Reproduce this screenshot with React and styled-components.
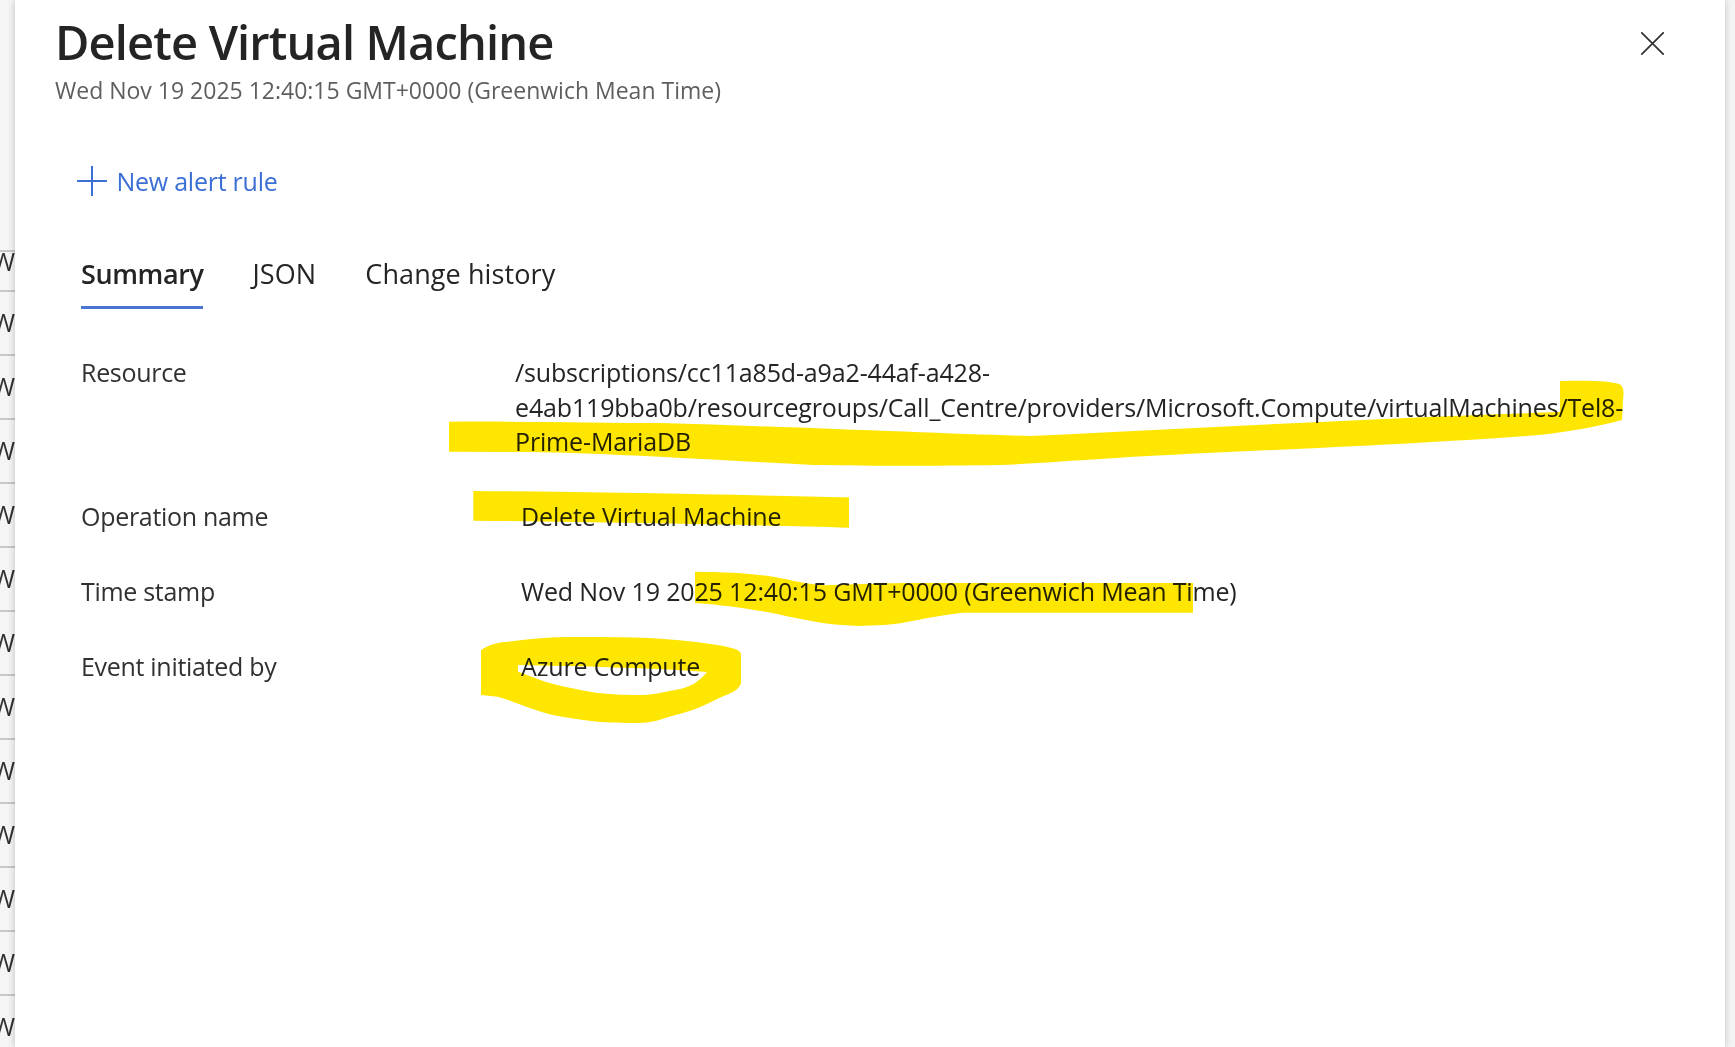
import React from "react";
import styled, { createGlobalStyle } from "styled-components";

const GlobalStyle = createGlobalStyle`
  html, body { margin: 0; padding: 0; background: #fff; }
  body {
    font-family: "Open Sans", "Noto Sans", sans-serif;
    color: #323130;
  }
  * { box-sizing: border-box; }
`;

const Page = styled.div`
  position: relative;
  display: flex;
  width: 100%;
  height: 100vh;
  overflow: hidden;
  background: #f4f4f4;
`;

const BackList = styled.div`
  flex: none;
  width: 15px;
  overflow: hidden;
  background: #f5f5f5;
  padding-top: 250px;
`;

const BackRow = styled.div`
  height: ${(p) => (p.$first ? "39.5px" : "64px")};
  border-top: 2px solid #c8c8c8;
  display: flex;
  justify-content: flex-end;
  align-items: ${(p) => (p.$first ? "flex-start" : "center")};
  padding-top: ${(p) => (p.$first ? "1px" : "0")};
  overflow: hidden;
`;

const BackText = styled.span`
  display: block;
  font-size: 25px;
  line-height: 17px;
  color: #323130;
  white-space: nowrap;
`;

const Panel = styled.main`
  position: relative;
  z-index: 1;
  flex: 1;
  min-width: 0;
  background: #fff;
  box-shadow: -2px 0 6px rgba(0, 0, 0, 0.12), 2px 0 6px rgba(0, 0, 0, 0.1);
  padding: 14px 61px 0 38px;
  display: flex;
  flex-direction: column;
`;

const RightStrip = styled.div`
  flex: none;
  width: 10px;
  background: #f4f4f4;
`;

const Header = styled.header`
  display: flex;
  justify-content: space-between;
  align-items: flex-start;
`;

const TitleBlock = styled.div`
  display: flex;
  flex-direction: column;
`;

const Title = styled.h1`
  margin: 0 0 0 2px;
  font-size: 47px;
  line-height: 56px;
  font-weight: 600;
  letter-spacing: -0.85px;
  color: #242424;
`;

const Subtitle = styled.div`
  margin: 5px 0 0 2px;
  font-size: 23px;
  line-height: 30px;
  letter-spacing: 0;
  color: #605e5c;
`;

const CloseButton = styled.button`
  margin-top: 17.7px;
  padding: 0;
  border: none;
  background: transparent;
  width: 23px;
  height: 23px;
  display: flex;
  cursor: pointer;
`;

const Toolbar = styled.div`
  margin-top: 59px;
  display: flex;
`;

const AlertButton = styled.button`
  margin-left: 23.5px;
  height: 34px;
  padding: 0;
  border: none;
  background: transparent;
  display: flex;
  align-items: center;
  gap: 10px;
  font-family: inherit;
  font-size: 25px;
  line-height: 34px;
  letter-spacing: -0.25px;
  color: #3b6fd4;
  cursor: pointer;
`;

const TabList = styled.nav`
  margin: 57.5px 0 0 28px;
  display: flex;
  gap: 49px;
`;

const Tab = styled.div`
  font-size: 27px;
  line-height: 36px;
  letter-spacing: ${(p) => (p.$active ? "-0.4px" : "0.1px")};
  font-weight: ${(p) => (p.$active ? 600 : 400)};
  color: #242424;
  padding-bottom: 14.5px;
  border-bottom: 3px solid ${(p) => (p.$active ? "#4775d1" : "transparent")};
`;

const Details = styled.dl`
  margin: 46px 0 0 28px;
  display: grid;
  grid-template-columns: 440px 1fr;
  row-gap: 40.5px;
`;

const Label = styled.dt`
  margin: 0;
  font-size: 25px;
  line-height: 34.5px;
  letter-spacing: -0.3px;
  color: #323130;
`;

const Value = styled.dd`
  margin: 0 0 0 ${(p) => p.$shift || 0}px;
  font-size: 25px;
  line-height: 34.5px;
  letter-spacing: -0.15px;
  color: #242424;
`;

const Line = styled.span`
  display: block;
  white-space: nowrap;
`;

const Highlights = styled.svg`
  position: absolute;
  left: 0;
  top: 0;
  z-index: 2;
  pointer-events: none;
  mix-blend-mode: multiply;
`;

const YELLOW = "#ffe600";

const stamp = "Wed Nov 19 2025 12:40:15 GMT+0000 (Greenwich Mean Time)";

export default function App() {
  const rows = Array.from({ length: 13 }, (_, i) => i);
  return (
    <>
      <GlobalStyle />
      <Page>
        <BackList>
          {rows.map((i) => (
            <BackRow key={i} $first={i === 0}>
              <BackText>W</BackText>
            </BackRow>
          ))}
        </BackList>
        <Panel>
          <Header>
            <TitleBlock>
              <Title>Delete Virtual Machine</Title>
              <Subtitle>{stamp}</Subtitle>
            </TitleBlock>
            <CloseButton aria-label="Close">
              <svg width="23" height="23" viewBox="0 0 23 23">
                <path
                  d="M0.8 0.8 L22.2 22.2 M22.2 0.8 L0.8 22.2"
                  stroke="#323130"
                  strokeWidth="1.7"
                  strokeLinecap="round"
                  fill="none"
                />
              </svg>
            </CloseButton>
          </Header>
          <Toolbar>
            <AlertButton>
              <svg width="30" height="30" viewBox="0 0 30 30">
                <path
                  d="M15 0 V30 M0 15 H30"
                  stroke="#3b6fd4"
                  strokeWidth="2"
                  fill="none"
                />
              </svg>
              New alert rule
            </AlertButton>
          </Toolbar>
          <TabList>
            <Tab $active>Summary</Tab>
            <Tab>JSON</Tab>
            <Tab>Change history</Tab>
          </TabList>
          <Details>
            <Label>Resource</Label>
            <Value $shift={-6}>
              <Line>/subscriptions/cc11a85d-a9a2-44af-a428-</Line>
              <Line>
                e4ab119bba0b/resourcegroups/Call_Centre/providers/Microsoft.Compute/virtualMachines/Tel8-
              </Line>
              <Line>Prime-MariaDB</Line>
            </Value>
            <Label>Operation name</Label>
            <Value>Delete Virtual Machine</Value>
            <Label>Time stamp</Label>
            <Value>{stamp}</Value>
            <Label>Event initiated by</Label>
            <Value>Azure Compute</Value>
          </Details>
        </Panel>
        <RightStrip />
        <Highlights width="1735" height="1047" viewBox="0 0 1735 1047">
          <path
            fill={YELLOW}
            d="M449 421.7 C520 421 600 423 660 423 C800 427 950 434 1030 436 C1200 428 1400 417 1560 412 L1560 381 C1590 380 1610 381 1619 384 C1624 386 1624 392 1623 400 L1622 420 C1600 426 1575 431 1539 435 C1450 442 1300 449 1207 453 C1100 458 1050 463 1000 465 C930 466 880 466 813 465 C700 459 600 453 530 452 L449 451.7 Z"
          />
          <path
            fill={YELLOW}
            d="M473.3 491 C600 492 750 495 849 497.3 L849 527.7 C750 525 600 522 473.3 520.7 Z"
          />
          <path
            fill={YELLOW}
            d="M695 571.7 C730 572 760 574 780 578 C800 582 815 586 832 585 C860 584 890 583 911 583 L1193 583 L1193 612.7 L963 612.7 C930 616 905 624 884 625 L858 626 C835 625 820 623 806 620 C785 616 770 612 754 610 C730 606 710 604 695 603 Z"
          />
          <path
            fill={YELLOW}
            fillRule="evenodd"
            d="M481 650 C490 644 500 642 508 641.7 C530 639 550 637 571 637 C600 637 630 637 649 638 C680 640 700 642 717 645 C735 648 741 650 741 655 L741 683 C739 690 732 693 722 696.7 C705 705 690 712 675 715 C660 720 650 723 639 723 C620 723 610 722.5 597 721.7 C575 719 560 717 545 713 C525 707 510 700 497.5 696.7 L481 695 Z M518 665 C580 666 650 668 707 672 C700 681 690 688 675 690 C660 693 650 695 639 695 C620 695 610 694 597 693 C575 689 560 686 545 681.7 C535 678 525 674 518 671.7 Z"
          />
        </Highlights>
      </Page>
    </>
  );
}
